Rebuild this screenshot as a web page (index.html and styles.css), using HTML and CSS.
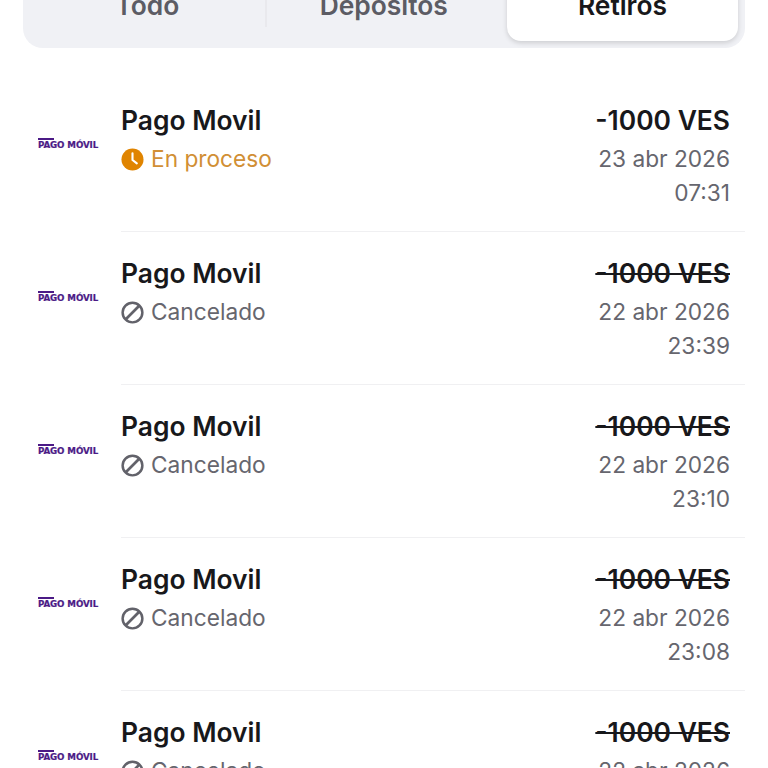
FILE: index.html

```html
<!DOCTYPE html>
<html lang="es">
<head>
<meta charset="UTF-8" />
<meta name="viewport" content="width=device-width, initial-scale=1.0" />
<title>Retiros</title>
<link rel="stylesheet" href="styles.css">
</head>
<body>
<div class="tabs">
  <div class="tab">Todo</div>
  <div class="tab-line"></div>
  <div class="tab">Depósitos</div>
  <div class="tab active">Retiros</div>
</div>

<div class="list">
  <div class="row">
    <div class="logo"><span class="logo-bar"></span><span class="logo-text">PAGO MÓVIL</span></div>
    <div class="info first">
      <div class="left">
        <div class="name">Pago Movil</div>
        <div class="status pending">
          <svg class="icon" viewBox="0 0 24 24"><circle cx="12" cy="12" r="11.5" fill="#e08400"/><path d="M12 5.5V12.5L16.5 16" fill="none" stroke="#fff" stroke-width="2.2" stroke-linecap="round" stroke-linejoin="round"/></svg>
          En proceso
        </div>
      </div>
      <div class="right">
        <div class="amount">-1000 VES</div>
        <div class="date">23 abr 2026</div>
        <div class="date">07:31</div>
      </div>
    </div>
  </div>

  <div class="row">
    <div class="logo"><span class="logo-bar"></span><span class="logo-text">PAGO MÓVIL</span></div>
    <div class="info">
      <div class="left">
        <div class="name">Pago Movil</div>
        <div class="status">
          <svg class="icon" viewBox="0 0 24 24"><circle cx="12" cy="12" r="10.3" fill="none" stroke="#62626a" stroke-width="2.6"/><path d="M19 5L5 19" stroke="#62626a" stroke-width="2.8"/></svg>
          Cancelado
        </div>
      </div>
      <div class="right">
        <div class="amount canceled">-1000 VES</div>
        <div class="date">22 abr 2026</div>
        <div class="date">23:39</div>
      </div>
    </div>
  </div>

  <div class="row">
    <div class="logo"><span class="logo-bar"></span><span class="logo-text">PAGO MÓVIL</span></div>
    <div class="info">
      <div class="left">
        <div class="name">Pago Movil</div>
        <div class="status">
          <svg class="icon" viewBox="0 0 24 24"><circle cx="12" cy="12" r="10.3" fill="none" stroke="#62626a" stroke-width="2.6"/><path d="M19 5L5 19" stroke="#62626a" stroke-width="2.8"/></svg>
          Cancelado
        </div>
      </div>
      <div class="right">
        <div class="amount canceled">-1000 VES</div>
        <div class="date">22 abr 2026</div>
        <div class="date">23:10</div>
      </div>
    </div>
  </div>

  <div class="row">
    <div class="logo"><span class="logo-bar"></span><span class="logo-text">PAGO MÓVIL</span></div>
    <div class="info">
      <div class="left">
        <div class="name">Pago Movil</div>
        <div class="status">
          <svg class="icon" viewBox="0 0 24 24"><circle cx="12" cy="12" r="10.3" fill="none" stroke="#62626a" stroke-width="2.6"/><path d="M19 5L5 19" stroke="#62626a" stroke-width="2.8"/></svg>
          Cancelado
        </div>
      </div>
      <div class="right">
        <div class="amount canceled">-1000 VES</div>
        <div class="date">22 abr 2026</div>
        <div class="date">23:08</div>
      </div>
    </div>
  </div>

  <div class="row">
    <div class="logo"><span class="logo-bar"></span><span class="logo-text">PAGO MÓVIL</span></div>
    <div class="info">
      <div class="left">
        <div class="name">Pago Movil</div>
        <div class="status">
          <svg class="icon" viewBox="0 0 24 24"><circle cx="12" cy="12" r="10.3" fill="none" stroke="#62626a" stroke-width="2.6"/><path d="M19 5L5 19" stroke="#62626a" stroke-width="2.8"/></svg>
          Cancelado
        </div>
      </div>
      <div class="right">
        <div class="amount canceled">-1000 VES</div>
        <div class="date">22 abr 2026</div>
        <div class="date">23:05</div>
      </div>
    </div>
  </div>
</div>
</body>
</html>
```

FILE: styles.css

```css
html, body {
  height: 768px;
  overflow: hidden;
}

body {
  font-family: Inter, "Noto Sans", sans-serif;
  background: #fff;
  color: #18181b;
  margin: 0;
}

.tabs {
  display: flex;
  align-items: stretch;
  height: 62px;
  margin: -28px 23px 0;
  padding: 7px;
  background-color: #f0f1f5;
  border-radius: 20px;
}

.tab {
  flex: 1;
  padding-top: 10px;
  text-align: center;
  font-size: 26.4px;
  line-height: 32px;
  font-weight: 560;
  color: #5c5c64;
}

.tab-line {
  width: 2px;
  margin: 0 0 14px;
  background-color: #e9e9ed;
}

.tab.active {
  flex: none;
  width: 231px;
  margin-left: 6px;
  background-color: #fff;
  color: #18181b;
  border-radius: 14px;
  box-shadow: 0 2px 5px rgba(0,0,0,0.15);
}

.list {
  margin-top: 30px;
}

.row {
  display: flex;
  height: 153px;
}

.logo {
  width: 121px;
  flex: none;
  padding: 60px 0 0 38px;
  box-sizing: border-box;
  display: flex;
  flex-direction: column;
}

.logo-bar {
  width: 16px;
  height: 2px;
  background-color: #4b1a86;
}

.logo-text {
  font-family: "DejaVu Sans", sans-serif;
  font-size: 8.7px;
  line-height: 10px;
  font-weight: 700;
  letter-spacing: -0.1px;
  color: #4b1a86;
  -webkit-text-stroke: 0.2px #4b1a86;
  white-space: nowrap;
}

.info {
  flex: 1;
  display: flex;
  justify-content: space-between;
  padding: 21px 15px 0 0;
  margin-right: 23px;
  border-top: 1px solid #f0f0f2;
}

.info.first {
  border-top-color: transparent;
}

.name {
  font-size: 26.4px;
  line-height: 40px;
  font-weight: 560;
}

.status {
  display: flex;
  align-items: center;
  gap: 7px;
  font-size: 22.7px;
  line-height: 38px;
  color: #66666e;
}

.status.pending {
  color: #d18f35;
}

.icon {
  width: 23px;
  height: 23px;
  flex: none;
}

.right {
  text-align: right;
}

.amount {
  font-size: 26.4px;
  line-height: 40px;
  margin-bottom: 2px;
  font-weight: 560;
}

.amount.canceled {
  text-decoration: line-through;
}

.date {
  font-size: 22.7px;
  line-height: 34px;
  color: #66666e;
}
```
